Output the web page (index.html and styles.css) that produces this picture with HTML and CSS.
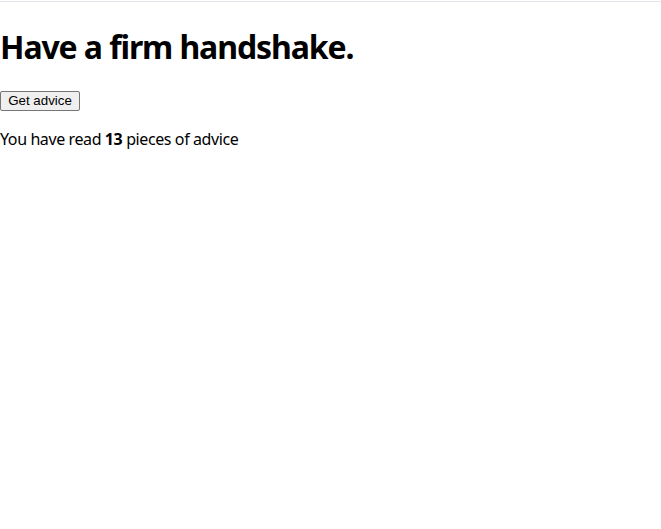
FILE: index.html
```html
<!DOCTYPE html>
<html>
<head>
<meta charset="utf-8">
<link rel="stylesheet" href="styles.css">
</head>
<body>
<div class="topline"></div>
<div class="app">
  <h1 class="advice">Have a firm handshake.</h1>
  <button class="btn">Get advice</button>
  <p class="count">You have read <strong>13</strong> pieces of advice</p>
</div>
</body>
</html>
```
FILE: styles.css
```css
html, body {
  margin: 0;
  padding: 0;
  background: #fff;
}
body {
  font-family: "Noto Sans", "Open Sans", sans-serif;
  color: #000;
}
.topline {
  margin-top: 1px;
  height: 1px;
  background: #e4e4ea;
}
.app {
  padding-top: 1px;
}
.advice {
  font-size: 32px;
  font-weight: 700;
  margin: 23px 0 23px;
  line-height: 1.3;
  letter-spacing: -1.1px;
}
.btn {
  display: block;
  font: 13.333px "Liberation Sans", Arial, sans-serif;
  padding: 1px 6px;
  border: 1px solid #767676;
  border-radius: 2px;
  background: #efefef;
  color: #000;
  height: 20px;
  width: 80px;
}
.count {
  font-size: 16px;
  margin: 18px 0 16px;
  line-height: 1.3;
  letter-spacing: -0.4px;
}
```
